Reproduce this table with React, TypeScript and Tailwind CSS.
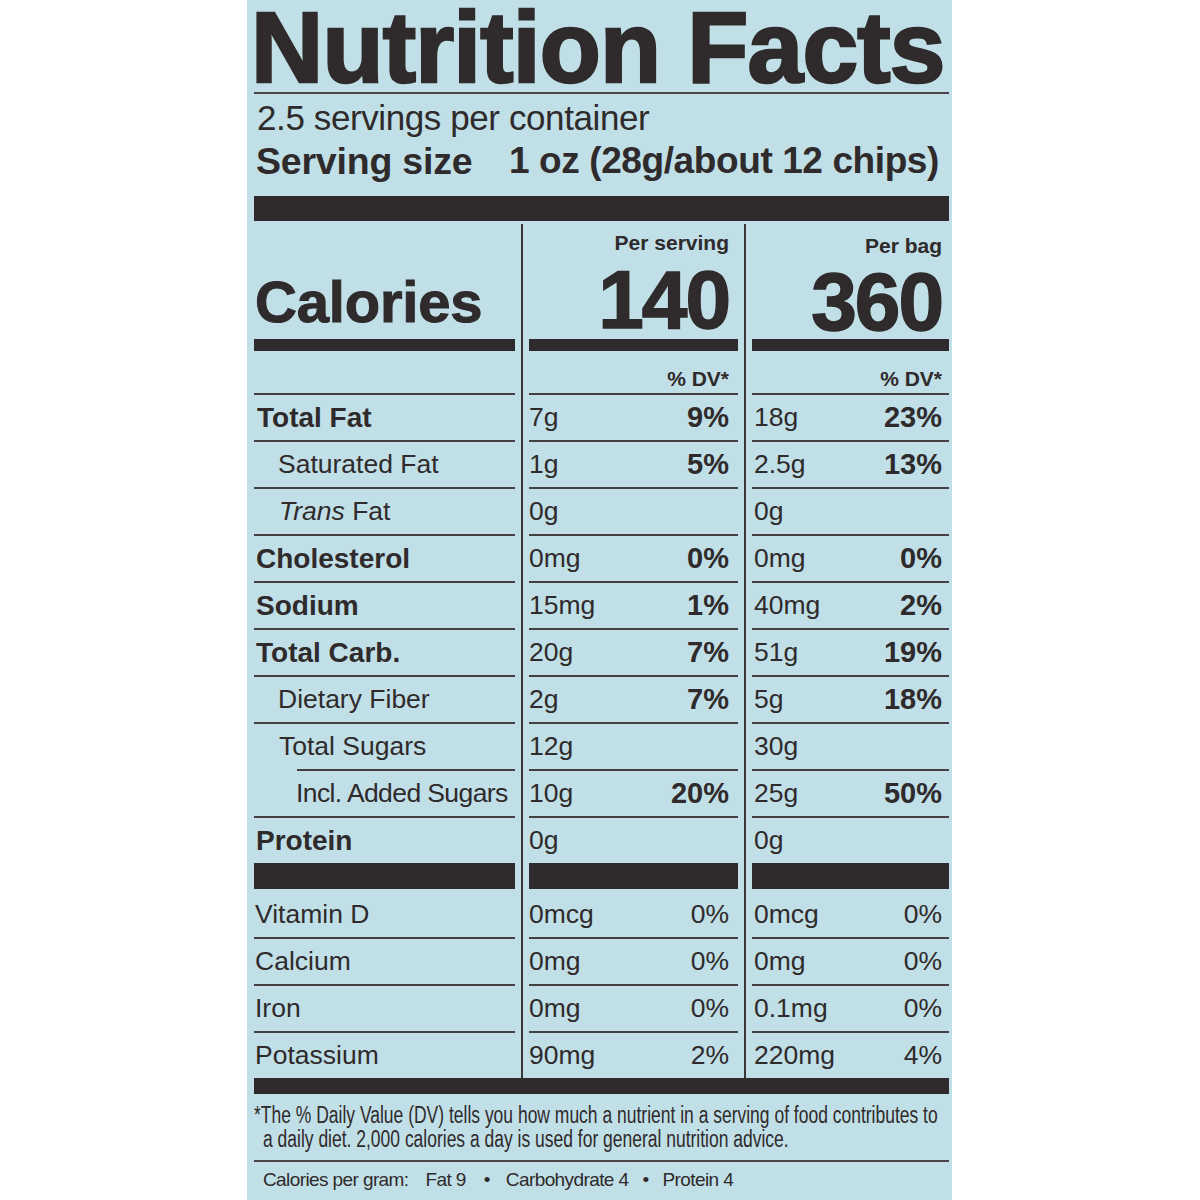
import React from "react";

type Row = {
  label: React.ReactNode;
  bold?: boolean;
  indent: string;
  lineIndent?: string;
  s: string;
  sp?: string;
  b: string;
  bp?: string;
};

const rows: Row[] = [
  { label: "Total Fat", bold: true, indent: "pl-[3px]", s: "7g", sp: "9%", b: "18g", bp: "23%" },
  { label: "Saturated Fat", indent: "pl-[24px]", s: "1g", sp: "5%", b: "2.5g", bp: "13%" },
  {
    label: (
      <>
        <span className="italic">Trans</span> Fat
      </>
    ),
    indent: "pl-[25px]",
    s: "0g",
    b: "0g",
  },
  { label: "Cholesterol", bold: true, indent: "pl-[2px]", s: "0mg", sp: "0%", b: "0mg", bp: "0%" },
  { label: "Sodium", bold: true, indent: "pl-[2px]", s: "15mg", sp: "1%", b: "40mg", bp: "2%" },
  { label: "Total Carb.", bold: true, indent: "pl-[2px]", s: "20g", sp: "7%", b: "51g", bp: "19%" },
  { label: "Dietary Fiber", indent: "pl-[24px]", s: "2g", sp: "7%", b: "5g", bp: "18%" },
  { label: "Total Sugars", indent: "pl-[25px]", s: "12g", b: "30g" },
  {
    label: <span className="tracking-[-0.6px]">Incl. Added Sugars</span>,
    indent: "pl-[42px]",
    lineIndent: "ml-[43px]",
    s: "10g",
    sp: "20%",
    b: "25g",
    bp: "50%",
  },
  { label: "Protein", bold: true, indent: "pl-[2px]", s: "0g", b: "0g" },
];

const vitamins = [
  { label: "Vitamin D", s: "0mcg", sp: "0%", b: "0mcg", bp: "0%" },
  { label: "Calcium", s: "0mg", sp: "0%", b: "0mg", bp: "0%" },
  { label: "Iron", s: "0mg", sp: "0%", b: "0.1mg", bp: "0%" },
  { label: "Potassium", s: "90mg", sp: "2%", b: "220mg", bp: "4%" },
];

function Line({ indent = "" }: { indent?: string }) {
  return <div className={`h-[2px] bg-[#443f40] ${indent}`} />;
}

function Bar({ h }: { h: string }) {
  return <div className={`${h} bg-[#2f2a2b]`} />;
}

function ValueCell({
  v,
  p,
  pad,
  boldPct = true,
  first = false,
}: {
  v: string;
  p?: string;
  pad: string;
  boldPct?: boolean;
  first?: boolean;
}) {
  return (
    <div className="flex flex-col">
      {!first && <Line />}
      <div
        className={`${first ? "h-[48px] pt-[3px]" : "h-[45px]"} leading-[45px] flex justify-between whitespace-nowrap ${pad}`}
      >
        <span className="text-[26.5px]">{v}</span>
        {p ? (
          <span className={boldPct ? "text-[29px] font-bold" : "text-[26.5px]"}>{p}</span>
        ) : null}
      </div>
    </div>
  );
}

function ValueColumn({
  width,
  pad,
  headTop,
  head,
  big,
  which,
  headPad,
  numMt,
}: {
  width: string;
  pad: string;
  headTop: string;
  head: string;
  big: string;
  which: "s" | "b";
  headPad: string;
  numMt: string;
}) {
  return (
    <div className={`${width} flex flex-col`}>
      <div className={`h-[118px] flex flex-col items-end ${headPad}`}>
        <div className={`${headTop} leading-[36px] text-[21px] font-bold whitespace-nowrap`}>{head}</div>
        <div
          className={`${numMt} leading-[70px] text-[82px] font-bold tracking-[-2px] [-webkit-text-stroke:1.5px_#2f2a2b]`}
        >
          {big}
        </div>
      </div>
      <Bar h="h-[12px]" />
      <div className={`h-[42px] pt-[14px] leading-[28px] text-[21px] font-bold text-right ${headPad}`}>
        % DV*
      </div>
      {rows.map((r, i) => (
        <ValueCell
          key={i}
          v={which === "s" ? r.s : r.b}
          p={which === "s" ? r.sp : r.bp}
          pad={pad}
        />
      ))}
      <Bar h="h-[26px]" />
      {vitamins.map((r, i) => (
        <ValueCell
          key={i}
          first={i === 0}
          v={which === "s" ? r.s : r.b}
          p={which === "s" ? r.sp : r.bp}
          pad={pad}
          boldPct={false}
        />
      ))}
    </div>
  );
}

function Divider() {
  return (
    <div className="w-[14px] flex justify-center pt-[3px]">
      <div className="w-[2px] h-full bg-[#3a3637]" />
    </div>
  );
}

export default function App() {
  return (
    <div className="w-[1200px] h-[1200px] bg-white flex overflow-hidden font-['Liberation_Sans',Arial,sans-serif]">
      <div className="ml-[247px] w-[705px] h-[1200px] shrink-0 bg-[#c1dfe7] pl-[7px] pr-[3px] text-[#2f2a2b] flex flex-col">
        <div className="h-[92px] pt-[2px] leading-[90px] text-[100px] font-bold tracking-[-0.8px] ml-[-3px] whitespace-nowrap [-webkit-text-stroke:2.5px_#2f2a2b]">
          Nutrition Facts
        </div>
        <div className="h-[2px] bg-[#4a4546]" />
        <div className="pt-[3px] h-[45px] leading-[42px] text-[35px] pl-[3px] tracking-[-0.4px] whitespace-nowrap">
          2.5 servings per container
        </div>
        <div className="h-[44px] leading-[44px] text-[37.5px] font-bold flex whitespace-nowrap tracking-[-0.2px]">
          <span className="w-[255px] pl-[2px]">Serving size</span>
          <span className="text-[37px] tracking-[-0.4px]">1 oz (28g/about 12 chips)</span>
        </div>
        <div className="mt-[13px] h-[25px] bg-[#2f2a2b]" />
        <div className="h-[857px] flex">
          <div className="w-[261px] flex flex-col">
            <div className="h-[118px] pt-[51px] leading-[60px] text-[58px] font-bold pl-[1px] tracking-[-0.2px] [-webkit-text-stroke:1px_#2f2a2b]">
              Calories
            </div>
            <Bar h="h-[12px]" />
            <div className="h-[42px]" />
            {rows.map((r, i) => (
              <div key={i} className="flex flex-col">
                <Line indent={r.lineIndent} />
                <div
                  className={`h-[45px] leading-[45px] whitespace-nowrap ${r.indent} ${
                    r.bold ? "text-[28px] font-bold" : "text-[26.5px]"
                  }`}
                >
                  {r.label}
                </div>
              </div>
            ))}
            <Bar h="h-[26px]" />
            {vitamins.map((r, i) => (
              <div key={i} className="flex flex-col">
                {i > 0 && <Line />}
                <div
                  className={`${i === 0 ? "h-[48px] pt-[3px]" : "h-[45px]"} leading-[45px] text-[26.5px] pl-[1px] whitespace-nowrap`}
                >
                  {r.label}
                </div>
              </div>
            ))}
          </div>
          <Divider />
          <ValueColumn
            width="w-[209px]"
            pad="pl-0 pr-[9px]"
            headPad="pr-[9px]"
            headTop="pt-[4px] h-[40px]"
            head="Per serving"
            big="140"
            which="s"
            numMt="mt-[4px]"
          />
          <Divider />
          <ValueColumn
            width="w-[197px]"
            pad="pl-[2px] pr-[7px]"
            headPad="pr-[7px]"
            headTop="pt-[7px] h-[43px]"
            head="Per bag"
            big="360"
            which="b"
            numMt="mt-[3px]"
          />
        </div>
        <div className="h-[16px] bg-[#2f2a2b]" />
        <div className="pt-[9px] text-[23px] leading-[24px] whitespace-nowrap">
          <div className="h-[24px]">
            <span className="inline-block origin-left scale-x-[0.76]">
              *The % Daily Value (DV) tells you how much a nutrient in a serving of food contributes to
            </span>
          </div>
          <div className="h-[24px] pl-[9px]">
            <span className="inline-block origin-left scale-x-[0.76]">
              a daily diet. 2,000 calories a day is used for general nutrition advice.
            </span>
          </div>
        </div>
        <div className="mt-[9px] h-[2px] bg-[#4a4546]" />
        <div className="pt-[6px] h-[30px] leading-[24px] text-[19px] tracking-[-0.6px] flex whitespace-nowrap pl-[9px]">
          <span>Calories per gram:</span>
          <span className="ml-[17px]">Fat 9</span>
          <span className="ml-[18px]">•</span>
          <span className="ml-[16px]">Carbohydrate 4</span>
          <span className="ml-[14px]">•</span>
          <span className="ml-[14px]">Protein 4</span>
        </div>
      </div>
    </div>
  );
}
